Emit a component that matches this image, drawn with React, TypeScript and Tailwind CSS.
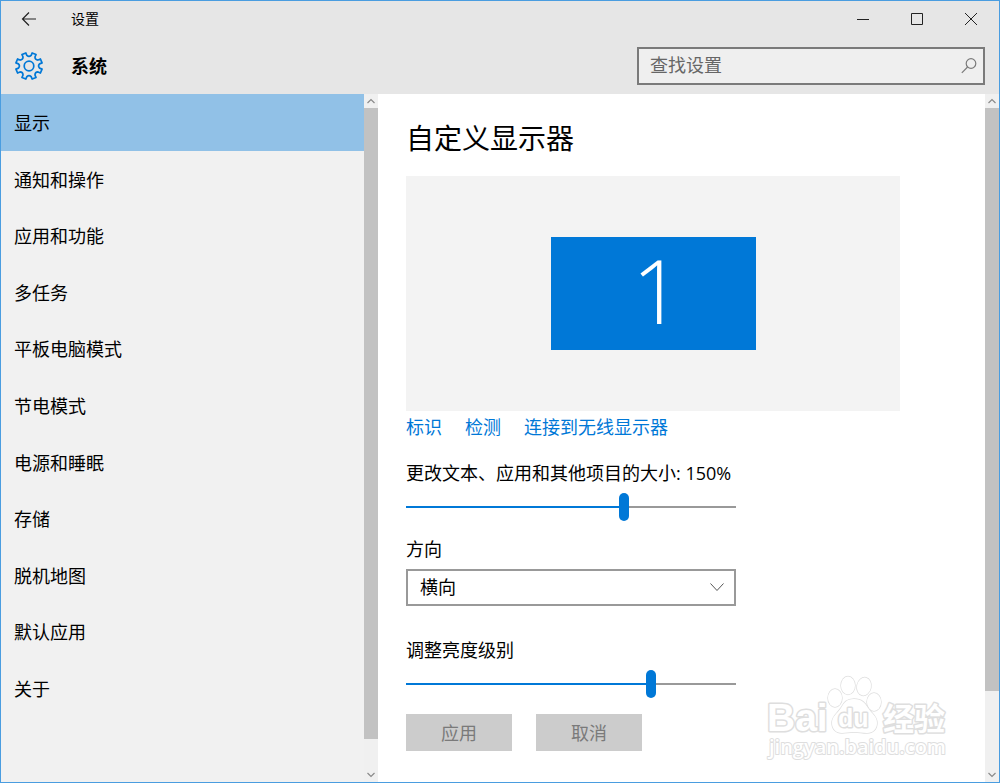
import { useId, useState } from "react";

const navItems = [
  "显示",
  "通知和操作",
  "应用和功能",
  "多任务",
  "平板电脑模式",
  "节电模式",
  "电源和睡眠",
  "存储",
  "脱机地图",
  "默认应用",
  "关于",
];

// Eight-toothed gear outline, teeth sit either side of each axis
function gearPath(cx: number, cy: number) {
  const point = (radius: number, deg: number) => {
    const a = (deg * Math.PI) / 180;
    return `${(cx + radius * Math.cos(a)).toFixed(2)} ${(cy + radius * Math.sin(a)).toFixed(2)}`;
  };
  let d = "";
  for (let i = 0; i < 8; i++) {
    const mid = i * 45 + 22.5;
    d += `${i === 0 ? "M" : "L"}${point(10.8, mid - 11)}`;
    d += `L${point(13.4, mid - 9)}L${point(13.4, mid + 9)}L${point(10.8, mid + 11)}`;
    d += `Q${point(8.6, mid + 22.5)} ${point(10.8, mid + 34)}`;
  }
  return d + "Z";
}

function GearIcon() {
  return (
    <svg className="size-7" viewBox="0 0 28 28" fill="none" stroke="#0078d7" strokeWidth="1.7" strokeLinejoin="round" aria-hidden="true">
      <path d={gearPath(14, 14)} />
      <circle cx="14" cy="14" r="4.8" />
    </svg>
  );
}

function Scrollbar({ thumb }: { thumb: number }) {
  return (
    <div className="flex w-3.5 shrink-0 flex-col bg-[#f0f0f0]" aria-hidden="true">
      <svg className="size-3.5 shrink-0" viewBox="0 0 14 14" fill="none" stroke="#8a8a8a" strokeWidth="1.2">
        <path d="M3.5 9 7 5.5 10.5 9" />
      </svg>
      <div className="min-h-0 flex-1">
        <div className="bg-[#c2c2c2]" style={{ height: `${thumb}%` }} />
      </div>
      <svg className="size-3.5 shrink-0" viewBox="0 0 14 14" fill="none" stroke="#8a8a8a" strokeWidth="1.2">
        <path d="M3.5 5 7 8.5 10.5 5" />
      </svg>
    </div>
  );
}

interface SliderProps {
  label: string;
  min: number;
  max: number;
  step: number;
  value: number;
  onChange: (value: number) => void;
}

function Slider({ label, min, max, step, value, onChange }: SliderProps) {
  const id = useId();
  const fill = ((value - min) / (max - min)) * 100;

  return (
    <div>
      <label htmlFor={id} className="block leading-6">
        {label}
      </label>
      <input
        id={id}
        type="range"
        min={min}
        max={max}
        step={step}
        value={value}
        onChange={(e) => onChange(Number(e.target.value))}
        className="mt-2 block h-7 w-full max-w-[330px] appearance-none bg-[length:100%_2px] bg-center bg-no-repeat [&::-webkit-slider-thumb]:h-7 [&::-webkit-slider-thumb]:w-2.5 [&::-webkit-slider-thumb]:appearance-none [&::-webkit-slider-thumb]:rounded-full [&::-webkit-slider-thumb]:bg-[#0078d7]"
        style={{
          backgroundImage: `linear-gradient(to right, #0078d7 ${fill}%, #999999 ${fill}%)`,
        }}
      />
    </div>
  );
}

function Watermark() {
  return (
    <svg
      className="pointer-events-none absolute right-9 bottom-4 h-[92px] w-[184px]"
      viewBox="0 0 184 92"
      fill="#ffffff"
      stroke="#dedede"
      strokeWidth="3"
      strokeLinejoin="round"
      paintOrder="stroke"
      aria-hidden="true"
    >
      <text x="2" y="57" fontFamily="Liberation Sans, sans-serif" fontWeight="700" fontSize="39">
        Bai
      </text>
      <g strokeWidth="1.4">
        <ellipse cx="70" cy="24" rx="7" ry="9" />
        <ellipse cx="83" cy="11.5" rx="7" ry="9" />
        <ellipse cx="99" cy="12.5" rx="7" ry="9" transform="rotate(12 99 12.5)" />
        <ellipse cx="109" cy="28" rx="7" ry="9" />
        <path d="M89 25c8 0 11 4 14 9 4 6 9 8 9 15 0 6-4 10-10 10-5 0-8-1-13-1s-8 1-12 1c-6 0-10-4-10-10 0-7 5-9 9-15 3-5 5-9 13-9Z" />
      </g>
      <text x="73" y="53" fontFamily="Liberation Sans, sans-serif" fontWeight="700" fontSize="25">
        du
      </text>
      <text x="118" y="56" fontFamily="Noto Sans CJK SC, sans-serif" fontWeight="700" fontSize="31">
        经验
      </text>
      <text x="4" y="80" fontFamily="Open Sans, sans-serif" fontWeight="600" fontSize="20" strokeWidth="2">
        jingyan.baidu.com
      </text>
    </svg>
  );
}

export default function App() {
  const [active, setActive] = useState("显示");
  const [scale, setScale] = useState(150);
  const [brightness, setBrightness] = useState(75);

  return (
    <div className="flex h-screen flex-col border border-[#4a9de0] bg-white font-['Open_Sans','Noto_Sans_CJK_SC',sans-serif] text-lg text-black">
      <header className="shrink-0 bg-[#e6e6e6]">
        {/* Title bar */}
        <div className="flex h-9 items-center">
          <button type="button" aria-label="返回" className="flex h-9 w-14 items-center justify-center">
            <svg className="size-4" viewBox="0 0 16 16" fill="none" stroke="#222222" strokeWidth="1.2">
              <path d="M15 8H1.5M8 1.5 1.5 8 8 14.5" />
            </svg>
          </button>
          <span className="ml-3.5 text-sm">设置</span>
          <div className="ml-auto flex pr-px">
            <button type="button" aria-label="最小化" className="flex h-9 w-[54px] items-center justify-center">
              <svg className="size-3" viewBox="0 0 12 12" stroke="#222222">
                <path d="M0 6.5h12" />
              </svg>
            </button>
            <button type="button" aria-label="最大化" className="flex h-9 w-[54px] items-center justify-center">
              <svg className="size-3" viewBox="0 0 12 12" fill="none" stroke="#222222">
                <path d="M.5.5h11v11H.5z" />
              </svg>
            </button>
            <button type="button" aria-label="关闭" className="flex h-9 w-[54px] items-center justify-center">
              <svg className="size-3" viewBox="0 0 12 12" fill="none" stroke="#222222">
                <path d="m0 0 12 12M12 0 0 12" />
              </svg>
            </button>
          </div>
        </div>

        <div className="flex h-[57px] items-center pr-3.5 pl-3.5">
          <GearIcon />
          <h1 className="ml-7 font-bold">系统</h1>
          <div className="relative ml-auto w-[348px]">
            <input
              type="search"
              aria-label="查找设置"
              placeholder="查找设置"
              className="block h-[38px] w-full border-2 border-[#7a7a7a] bg-[#efefef] pr-9 pb-0.5 pl-[11px] outline-none placeholder:text-[#666666]"
            />
            <svg className="pointer-events-none absolute top-[11px] right-2 size-4" viewBox="0 0 16 16" fill="none" stroke="#7a7a7a" strokeWidth="1.2">
              <circle cx="10" cy="5.5" r="4.8" />
              <path d="M6.6 9 .8 14.8" />
            </svg>
          </div>
        </div>
      </header>

      <div className="flex min-h-0 flex-1">
        <aside className="flex w-[377px] shrink-0 bg-[#f1f1f1]">
          <nav className="min-w-0 flex-1 overflow-hidden">
            <ul className="grid h-[622px] grid-rows-11">
              {navItems.map((item) => (
                <li key={item} className="flex">
                  <button
                    type="button"
                    onClick={() => setActive(item)}
                    className={`flex-1 pt-0.5 pl-[13px] text-left ${active === item ? "bg-[#91c1e7]" : "hover:bg-[#e3e3e3]"}`}
                  >
                    {item}
                  </button>
                </li>
              ))}
            </ul>
          </nav>
          <Scrollbar thumb={95.6} />
        </aside>

        <main className="relative min-w-0 flex-1 overflow-hidden px-7 pt-6">
          <h2 className="text-[28px] leading-10">自定义显示器</h2>

          {/* Monitor preview */}
          <div className="mt-[18px] flex h-[235px] max-w-[494px] items-center justify-center bg-[#f3f3f3]">
            <div className="flex h-[113px] w-[205px] items-center justify-center bg-[#0078d7] pb-2 pl-2 text-[88px] leading-none font-light text-white">
              1
            </div>
          </div>

          <div className="mt-0.5 flex gap-[23px] leading-7 text-[#0078d7]">
            <a href="#identify">标识</a>
            <a href="#detect">检测</a>
            <a href="#wireless">连接到无线显示器</a>
          </div>

          <div className="mt-5">
            <Slider
              label={`更改文本、应用和其他项目的大小: ${scale}%`}
              min={100}
              max={175}
              step={25}
              value={scale}
              onChange={setScale}
            />
          </div>

          <div className="mt-4">
            <label htmlFor="orientation" className="block leading-6">
              方向
            </label>
            <div className="relative mt-2 max-w-[330px]">
              <select
                id="orientation"
                defaultValue="landscape"
                className="block h-[37px] w-full appearance-none border-2 border-[#999999] bg-white pr-9 pb-0.5 pl-3 outline-none"
              >
                <option value="landscape">横向</option>
                <option value="portrait">纵向</option>
              </select>
              <svg className="pointer-events-none absolute top-[11px] right-3 size-3.5" viewBox="0 0 14 14" fill="none" stroke="#555555">
                <path d="m.5 3.5 6.5 7 6.5-7" />
              </svg>
            </div>
          </div>

          <div className="mt-8">
            <Slider
              label="调整亮度级别"
              min={0}
              max={100}
              step={1}
              value={brightness}
              onChange={setBrightness}
            />
          </div>

          <div className="mt-4 flex gap-6">
            <button type="button" disabled className="h-[37px] w-[106px] bg-[#cccccc] text-[#7a7a7a]">
              应用
            </button>
            <button type="button" disabled className="h-[37px] w-[106px] bg-[#cccccc] text-[#7a7a7a]">
              取消
            </button>
          </div>

          <Watermark />
        </main>
        <Scrollbar thumb={88.3} />
      </div>
    </div>
  );
}
